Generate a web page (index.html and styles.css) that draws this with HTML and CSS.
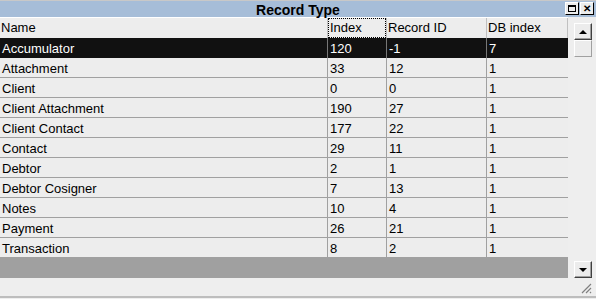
FILE: index.html
```html
<!DOCTYPE html>
<html lang="en">
<head>
  <meta charset="UTF-8" />
  <title>Record Type</title>
  <link rel="stylesheet" href="styles.css">
</head>
<body>
  <div class="window">
    <div class="titlebar">
      <span class="title">Record Type</span>
      <div class="title-buttons">
        <span class="tbtn"><span class="restore"></span></span>
        <span class="tbtn close">&#x2715;</span>
      </div>
    </div>
    <div class="content">
      <div class="grid">
        <div class="row head">
          <div class="cell">Name</div>
          <div class="cell"><span class="focus">Index</span></div>
          <div class="cell">Record ID</div>
          <div class="cell">DB index</div>
        </div>
        <div class="row selected">
          <div class="cell">Accumulator</div><div class="cell">120</div><div class="cell">-1</div><div class="cell">7</div>
        </div>
        <div class="row">
          <div class="cell">Attachment</div><div class="cell">33</div><div class="cell">12</div><div class="cell">1</div>
        </div>
        <div class="row">
          <div class="cell">Client</div><div class="cell">0</div><div class="cell">0</div><div class="cell">1</div>
        </div>
        <div class="row">
          <div class="cell">Client Attachment</div><div class="cell">190</div><div class="cell">27</div><div class="cell">1</div>
        </div>
        <div class="row">
          <div class="cell">Client Contact</div><div class="cell">177</div><div class="cell">22</div><div class="cell">1</div>
        </div>
        <div class="row">
          <div class="cell">Contact</div><div class="cell">29</div><div class="cell">11</div><div class="cell">1</div>
        </div>
        <div class="row">
          <div class="cell">Debtor</div><div class="cell">2</div><div class="cell">1</div><div class="cell">1</div>
        </div>
        <div class="row">
          <div class="cell">Debtor Cosigner</div><div class="cell">7</div><div class="cell">13</div><div class="cell">1</div>
        </div>
        <div class="row">
          <div class="cell">Notes</div><div class="cell">10</div><div class="cell">4</div><div class="cell">1</div>
        </div>
        <div class="row">
          <div class="cell">Payment</div><div class="cell">26</div><div class="cell">21</div><div class="cell">1</div>
        </div>
        <div class="row last">
          <div class="cell">Transaction</div><div class="cell">8</div><div class="cell">2</div><div class="cell">1</div>
        </div>
        <div class="filler"></div>
      </div>
      <div class="scrollbar">
        <div class="sbtn"><span class="arrow up"></span></div>
        <div class="sbtn thumb"></div>
        <div class="track"></div>
        <div class="sbtn"><span class="arrow down"></span></div>
      </div>
    </div>
    <div class="footer">
      <svg class="grip" width="12" height="12" viewBox="0 0 12 12">
        <path d="M11 2 L2 11 M11 6 L6 11 M11 10 L10 11" stroke="#808080" stroke-width="1.2" fill="none" />
      </svg>
    </div>
    <div class="bottom-line"></div>
  </div>
</body>
</html>
```

FILE: styles.css
```css
* {
  box-sizing: border-box;
}
body {
  margin: 0;
  background: #eeeeee;
  font-family: 'Liberation Sans', Arial, sans-serif;
  font-size: 13px;
  color: #000;
}

.window {
  width: 596px;
  height: 299px;
  display: flex;
  flex-direction: column;
  background: #eeeeee;
}

.titlebar {
  height: 17px;
  background: #a6bdd8;
  border-top: 1px solid #c8c8c8;
  display: flex;
  align-items: center;
  justify-content: center;
  position: relative;
}
.title {
  font-weight: bold;
  font-size: 14px;
  line-height: 16px;
  padding-top: 1px;
}
.title-buttons {
  position: absolute;
  right: 2px;
  top: 1px;
  display: flex;
  gap: 1px;
}
.tbtn {
  width: 14px;
  height: 13px;
  background: #ececec;
  border-top: 1px solid #fff;
  border-left: 1px solid #fff;
  border-right: 1px solid #000;
  border-bottom: 1px solid #000;
  display: flex;
  align-items: center;
  justify-content: center;
  font-size: 10px;
  font-weight: bold;
  line-height: 1;
}
.restore {
  width: 8px;
  height: 7px;
  border: 1px solid #000;
  border-top-width: 2px;
}

.content {
  display: flex;
  height: 261px;
}

.grid {
  width: 568px;
  display: flex;
  flex-direction: column;
}

.row {
  display: grid;
  grid-template-columns: 328px 59px 100px 81px;
  height: 20px;
  border-bottom: 1px solid #a0a0a0;
  background: #ededed;
}
.cell {
  padding-left: 2px;
  padding-top: 1px;
  line-height: 19px;
  border-right: 1px solid #a0a0a0;
  white-space: nowrap;
  overflow: hidden;
}
.cell:last-child {
  border-right: none;
}

.row.head {
  height: 21px;
  border-bottom: none;
  border-top: 1px solid #fff;
}
.row.head .cell {
  border-right: 1px solid #c0c0c0;
  line-height: 19px;
  padding-top: 0;
  padding-left: 1px;
}
.row.head .cell:last-child {
  border-right: 1px solid #c0c0c0;
}
.focus {
  display: inline-block;
  outline: 1px dotted #000;
  outline-offset: 0;
  width: 56px;
  height: 18px;
  line-height: 18px;
  padding-left: 1px;
}

.row.selected {
  background: #111;
  color: #fff;
  border-bottom: none;
}
.row.selected .cell {
  border-right-color: #777;
}

.filler {
  height: 20px;
  background: #a0a0a0;
}

.scrollbar {
  width: 28px;
  display: flex;
  flex-direction: column;
  align-items: center;
  padding-top: 6px;
  padding-left: 2px;
}
.sbtn {
  width: 18px;
  height: 17px;
  background: #ececec;
  border-top: 1px solid #fff;
  border-left: 1px solid #fff;
  border-right: 1px solid #404040;
  border-bottom: 1px solid #404040;
  box-shadow: inset -1px -1px 0 #a0a0a0;
  display: flex;
  align-items: center;
  justify-content: center;
}
.sbtn.thumb {
  height: 17px;
  border-right-color: #a0a0a0;
  border-bottom-color: #a0a0a0;
  box-shadow: none;
}
.track {
  flex: 1;
}
.arrow {
  width: 0;
  height: 0;
  border-left: 4px solid transparent;
  border-right: 4px solid transparent;
}
.arrow.up {
  border-bottom: 4px solid #000;
}
.arrow.down {
  border-top: 4px solid #000;
}

.footer {
  height: 18px;
  display: flex;
  justify-content: flex-end;
  align-items: flex-end;
  padding-right: 4px;
  padding-bottom: 2px;
}

.bottom-line {
  height: 3px;
  border-top: 2px solid #bdbdbd;
}
```
